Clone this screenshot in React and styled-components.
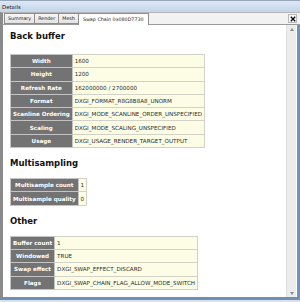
import React from "react";
import styled, { createGlobalStyle } from "styled-components";

const Global = createGlobalStyle`
  html, body { margin: 0; padding: 0; background: #ffffff; }
  body { font-family: "DejaVu Sans", Verdana, sans-serif; }
`;

const Window = styled.div`
  width: 300px;
  height: 302px;
  display: flex;
  flex-direction: column;
  background: #d6e2ef;
  overflow: hidden;
  box-sizing: border-box;
`;

const TitleBar = styled.div`
  height: 12px;
  box-sizing: border-box;
  border-top: 1px solid #98a7b9;
  background: linear-gradient(#dce7f4, #c3d5ea);
  display: flex;
  align-items: center;
  padding-left: 2px;
  font-size: 5.4px;
  color: #1a1a1a;
`;

const TabBar = styled.div`
  height: 13px;
  box-sizing: border-box;
  display: flex;
  align-items: flex-end;
  background: #f2f2f2;
  border-top: 1px solid #b4b4b4;
  border-bottom: 1px solid #9a9a9a;
  border-left: 3px solid #8a8a8a;
  padding-left: 1px;
  padding-right: 2px;
`;

const Tab = styled.div`
  height: ${(p) => (p.$active ? "12px" : "11px")};
  margin-bottom: ${(p) => (p.$active ? "-1px" : "0")};
  box-sizing: border-box;
  padding: 0 ${(p) => (p.$active ? "4px" : "3px")};
  display: flex;
  align-items: center;
  font-size: 4.8px;
  color: #222;
  white-space: nowrap;
  background: ${(p) => (p.$active ? "#ffffff" : "linear-gradient(#f7f7f7, #e2e2e2)")};
  border: 1px solid #8e8e8e;
  border-bottom: ${(p) => (p.$active ? "none" : "1px solid #8e8e8e")};
  margin-right: -1px;
`;

const CloseButton = styled.div`
  margin-left: auto;
  margin-right: 1px;
  align-self: center;
  width: 9px;
  height: 9px;
  box-sizing: border-box;
  border: 1px solid #b8b8b8;
  background: #f8f8f8;
  display: flex;
  align-items: center;
  justify-content: center;
`;

const Main = styled.div`
  flex: 1;
  min-height: 0;
  display: flex;
  background: #ffffff;
  border-left: 3px solid #8a8a8a;
  border-right: 3px solid #7093b9;
  border-bottom: 3px solid #6f8fb3;
  margin-bottom: 2px;
`;

const Content = styled.div`
  flex: 1;
  padding: 6px 0 0 7px;
  display: flex;
  flex-direction: column;
  align-items: flex-start;
`;

const Heading = styled.div`
  font-size: 8.5px;
  line-height: 11px;
  font-weight: bold;
  color: #111;
  margin-top: ${(p) => (p.$first ? "0" : "10px")};
  margin-bottom: ${(p) => (p.$first ? "12px" : "9px")};
`;

const Table = styled.table`
  border-collapse: collapse;
  font-size: 5.6px;
`;

const Label = styled.td`
  height: 13.3px;
  padding: 0 2px;
  box-sizing: border-box;
  background: #737373;
  color: #ffffff;
  font-weight: bold;
  text-align: center;
  white-space: nowrap;
  border: 1px solid #c4c4c4;
`;

const Value = styled.td`
  height: 13.3px;
  padding: 0 2px;
  box-sizing: border-box;
  background: #fdfde6;
  color: #2a2a2a;
  white-space: nowrap;
  border: 1px solid #d2d2c6;
`;

const Scrollbar = styled.div`
  width: 9px;
  margin-right: 1px;
  background: #ececec;
  border-left: 1px solid #e0e0e0;
  display: flex;
  flex-direction: column;
  justify-content: space-between;
  align-items: center;
  padding: 3px 0 2px;
`;

const Arrow = styled.svg`
  display: block;
`;

const sections = [
  {
    title: "Back buffer",
    rows: [
      ["Width", "1600"],
      ["Height", "1200"],
      ["Refresh Rate", "162000000 / 2700000"],
      ["Format", "DXGI_FORMAT_R8G8B8A8_UNORM"],
      ["Scanline Ordering", "DXGI_MODE_SCANLINE_ORDER_UNSPECIFIED"],
      ["Scaling", "DXGI_MODE_SCALING_UNSPECIFIED"],
      ["Usage", "DXGI_USAGE_RENDER_TARGET_OUTPUT"],
    ],
  },
  {
    title: "Multisampling",
    rows: [
      ["Multisample count", "1"],
      ["Multisample quality", "0"],
    ],
  },
  {
    title: "Other",
    rows: [
      ["Buffer count", "1"],
      ["Windowed", "TRUE"],
      ["Swap effect", "DXGI_SWAP_EFFECT_DISCARD"],
      ["Flags", "DXGI_SWAP_CHAIN_FLAG_ALLOW_MODE_SWITCH"],
    ],
  },
];

const tabs = ["Summary", "Render", "Mesh", "Swap Chain 0x080D7730"];

export default function App() {
  return (
    <>
      <Global />
      <Window>
        <TitleBar>Details</TitleBar>
        <TabBar>
          {tabs.map((t, i) => (
            <Tab key={t} $active={i === 3}>
              {t}
            </Tab>
          ))}
          <CloseButton>
            <svg width="6" height="6" viewBox="0 0 6 6">
              <path d="M0.8 0.8 L5.2 5.2 M5.2 0.8 L0.8 5.2" stroke="#111" strokeWidth="1.4" />
            </svg>
          </CloseButton>
        </TabBar>
        <Main>
          <Content>
            {sections.map((s, i) => (
              <React.Fragment key={s.title}>
                <Heading $first={i === 0}>{s.title}</Heading>
                <Table>
                  <tbody>
                    {s.rows.map(([k, v]) => (
                      <tr key={k}>
                        <Label>{k}</Label>
                        <Value>{v}</Value>
                      </tr>
                    ))}
                  </tbody>
                </Table>
              </React.Fragment>
            ))}
          </Content>
          <Scrollbar>
            <Arrow width="4" height="3" viewBox="0 0 4 3">
              <path d="M0 3 L2 0 L4 3 Z" fill="#8a8a8a" />
            </Arrow>
            <Arrow width="4" height="3" viewBox="0 0 4 3">
              <path d="M0 0 L2 3 L4 0 Z" fill="#8a8a8a" />
            </Arrow>
          </Scrollbar>
        </Main>
      </Window>
    </>
  );
}
